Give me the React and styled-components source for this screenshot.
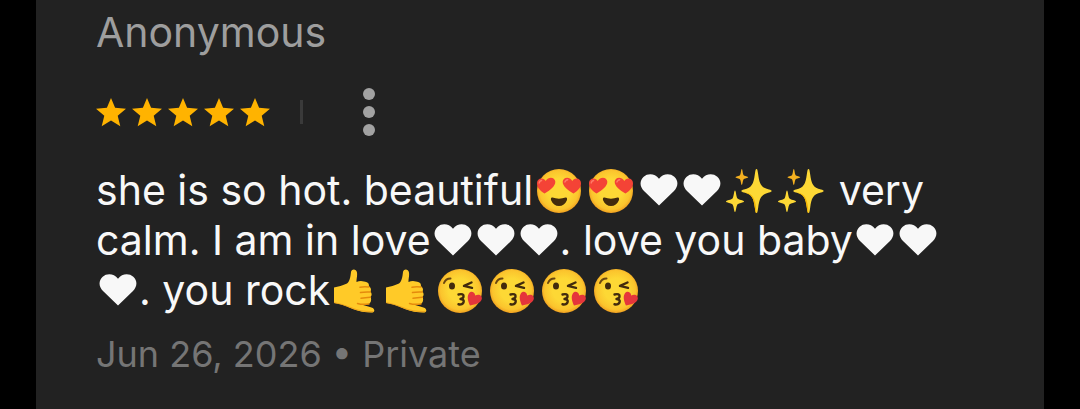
import React from "react";
import styled, { createGlobalStyle } from "styled-components";

const GlobalStyle = createGlobalStyle`
  body {
    margin: 0;
    background: #000000;
    font-family: Inter, Roboto, sans-serif;
  }
`;

const Page = styled.main`
  padding: 0 36px;
`;

const Card = styled.article`
  min-height: 100vh;
  box-sizing: border-box;
  padding: 7px 60px 28px;
  background: #222222;
`;

const Author = styled.h2`
  margin: 0;
  font-size: 41px;
  font-weight: 400;
  line-height: 50px;
  color: #9e9e9e;
`;

const RatingRow = styled.div`
  display: flex;
  align-items: center;
  height: 48px;
  margin: 31px 0 29px;
`;

const Stars = styled.div`
  display: flex;
  gap: 6px;
`;

const Divider = styled.span`
  width: 3px;
  height: 24px;
  margin: 0 54px 0 30px;
  background: #3a3a3a;
`;

const MenuButton = styled.button`
  display: flex;
  padding: 0;
  border: none;
  background: none;
  color: #a2a2a2;
  cursor: pointer;
`;

const Comment = styled.p`
  margin: 0;
  padding-right: 16px;
  font-size: 41px;
  line-height: 50px;
  color: #f8f8f8;
`;

const Emoji = styled.svg`
  width: ${(props) => (props.$narrow ? 43 : 52)}px;
  height: 44px;
  vertical-align: -8px;
`;

const Meta = styled.p`
  margin: 14px 0 0;
  font-size: 36px;
  line-height: 50px;
  color: #757575;
`;

const Defs = styled.svg`
  display: block;
  width: 0;
  height: 0;
`;

const Star = () => (
  <svg width="30" height="30" viewBox="0 0 30 30" aria-hidden="true">
    <path
      d="M15 1l4.1 9.8 10.9.9-8.3 7 2.6 10.6L15 23.6l-9.3 5.7 2.6-10.6-8.3-7 10.9-.9z"
      fill="#ffb300"
    />
  </svg>
);

const Heart = () => (
  <Emoji $narrow viewBox="0 0 43 44" role="img" aria-label="heart">
    <path
      d="M22 36.500L7 22C2.500 17.500 2.500 11.500 6.700 7.800C11 4 18 4.500 22 9.800C26 4.500 33 4 37.300 7.800C41.500 11.500 41.500 17.500 37 22z"
      fill="#f8f8f8"
    />
  </Emoji>
);

const FaceGradient = () => (
  <radialGradient id="face" cx="50%" cy="48%" r="52%">
    <stop offset="0.5" stopColor="#fdd835" />
    <stop offset="0.85" stopColor="#fbc42d" />
    <stop offset="1" stopColor="#f0a020" />
  </radialGradient>
);

const HeartEyes = () => (
  <Emoji viewBox="0 0 52 44" role="img" aria-label="heart eyes">
    <circle cx="26" cy="22" r="22" fill="url(#face)" />
    <path
      d="M11.500 24.500C7.500 22 3.700 18.500 4 14C4.200 9.500 9.500 7.800 12.700 12C15.500 7 21.800 8 22.300 12.500C22.700 17 17 21.500 11.500 24.500z"
      fill="#f44336"
    />
    <path
      d="M40.500 24.500C44.500 22 48.300 18.500 48 14C47.800 9.500 42.500 7.800 39.300 12C36.500 7 30.200 8 29.700 12.500C29.300 17 35 21.500 40.500 24.500z"
      fill="#f44336"
    />
    <path d="M6.200 14.500c0-2 1.500-3.300 3-3" stroke="#ff7b68" strokeWidth="1.500" fill="none" />
    <path d="M31.800 13.500c.3-2 2-3 3.400-2.500" stroke="#ff7b68" strokeWidth="1.500" fill="none" />
    <path
      d="M19.500 28.500C23.500 30 28.500 30 32.500 28.500C34 28 34.500 29.500 33.800 31.500C32.500 35 29.500 37 26 37C22.500 37 19.500 35 18.200 31.500C17.500 29.500 18 28 19.500 28.500z"
      fill="#422b0d"
    />
  </Emoji>
);

const Kiss = () => (
  <Emoji viewBox="0 0 52 44" role="img" aria-label="blowing a kiss">
    <circle cx="26" cy="22" r="22" fill="url(#face)" />
    <g fill="none" stroke="#422b0d" strokeLinecap="round" strokeLinejoin="round">
      <path d="M10 14c1-2.800 3.500-4.500 6.500-4.500" stroke="#6b4710" strokeWidth="2" />
      <path d="M37.500 13.500l-7.500 3.400 8 2" strokeWidth="2.400" />
      <path
        d="M24.500 25.500c3.500-1 5.500 0 5 2.200-.3 1.400-2 2.100-3 2.300 2 0 3.600 1 3.200 2.800-.4 2.200-2.700 3-5.200 2.500"
        strokeWidth="2.400"
      />
    </g>
    <ellipse cx="18" cy="17" rx="3" ry="3.500" fill="#422b0d" />
    <path
      d="M36 36.500C34 32 32.800 28 34.700 24.700C36.500 21.500 40.700 22.500 41.200 26.500C45 24.300 48.500 26.700 47.800 30C47 33.700 42 35.500 36 36.500z"
      fill="#e5353b"
    />
  </Emoji>
);

const Sparkles = () => (
  <Emoji viewBox="0 0 52 44" role="img" aria-label="sparkles">
    <path
      d="M33.500 0C34.500 0 34.700 2 35.200 5.500C36.500 15 38 18.500 46 20.500C49.500 21.300 49.500 22.700 46 23.500C38 25.500 36.500 29 35.200 38.500C34.700 42 34.500 44 33.500 44C32.500 44 32.300 42 31.800 38.500C30.500 29 29 25.500 21 23.500C17.500 22.700 17.500 21.300 21 20.500C29 18.500 30.500 15 31.800 5.500C32.300 2 32.500 0 33.500 0z"
      fill="#fdd835"
    />
    <path
      d="M33.500 44c-1 0-1.200-2-1.700-5.500C30.500 29 29 25.500 21 23.500c7 .5 12 3.500 12.500 20.500z"
      fill="#f4b400"
    />
    <path
      d="M12 21.500C13 21.500 13 27 14.300 29.300C15.300 31 21 31.300 21 32.500C21 33.700 15.300 34 14.300 35.700C13 38 13 43 12 43C11 43 11 38 9.700 35.700C8.700 34 3 33.700 3 32.500C3 31.300 8.700 31 9.700 29.300C11 27 11 21.500 12 21.500z"
      fill="#fdd835"
    />
    <path
      d="M18.800 0C19.600 0 19.600 4.500 20.500 6C21.300 7.200 25.200 7.300 25.200 8.200C25.200 9 21.300 9.200 20.500 10.500C19.600 12 19.600 16 18.800 16C18 16 18 12 17.100 10.500C16.300 9.200 12.500 9 12.500 8.200C12.500 7.300 16.300 7.200 17.100 6C18 4.500 18 0 18.800 0z"
      fill="#f4b020"
    />
  </Emoji>
);

const CallMe = () => (
  <Emoji viewBox="0 0 52 44" role="img" aria-label="call me hand">
    <path
      d="M4 18.500C8 17.500 13 16.500 17 14.500C19.500 13 20.500 8 21 3C21.300-.5 26.500-.5 27 3.500C27.500 7 26.300 10.500 26.500 13C29 12 31 11.500 34 12.500C38 13 39.500 14.500 38.800 17.500C41 18.500 41.500 20.500 40.500 22.500C42 24.500 42 26.500 40.500 28C41.500 30 41.300 32.500 40 34C38.500 35.700 34 35 31.500 35.500L41.500 38.500C45.500 40 45 43.500 41.500 43.500C35 43.500 29 42.500 23 40C18 38 14 35.500 4 34z"
      fill="#ffca28"
    />
    <g fill="none" stroke="#e58a0c" strokeWidth="1.500" strokeLinecap="round">
      <path d="M30 18.300c3-.8 6-.7 9-.3" />
      <path d="M30.500 23.600c3-.6 6-.7 9.800-.5" />
      <path d="M31 29.200c3-.2 6-.5 9.400-.9" />
      <path d="M27.500 34.500c4 1.200 8 1 11.500.4" />
    </g>
    <path
      d="M4 33.500C13 35 18 37.500 23 39.500C29 42 36 42.700 43.500 42.500"
      fill="none"
      stroke="#efa51c"
      strokeWidth="1.200"
    />
  </Emoji>
);

const App = () => {
  return (
    <Page>
      <GlobalStyle />
      <Card>
        <Author>Anonymous</Author>
        <RatingRow>
          <Stars role="img" aria-label="5 out of 5 stars">
            {[1, 2, 3, 4, 5].map((n) => (
              <Star key={n} />
            ))}
          </Stars>
          <Divider />
          <MenuButton type="button" aria-label="More options">
            <svg width="30" height="48" viewBox="0 0 30 48" fill="currentColor">
              <circle cx="12" cy="6" r="6" />
              <circle cx="12" cy="24" r="6" />
              <circle cx="12" cy="42" r="6" />
            </svg>
          </MenuButton>
        </RatingRow>
        <Comment>
          she is so hot. beautiful
          <HeartEyes />
          <HeartEyes />
          <Heart />
          <Heart />
          <Sparkles />
          <Sparkles /> very calm. I am in love
          <Heart />
          <Heart />
          <Heart />. love you baby
          <Heart />
          <Heart />
          <Heart />. you rock
          <CallMe />
          <CallMe />
          <Kiss />
          <Kiss />
          <Kiss />
          <Kiss />
        </Comment>
        <Meta>Jun 26, 2026 • Private</Meta>
        <Defs aria-hidden="true">
          <defs>
            <FaceGradient />
          </defs>
        </Defs>
      </Card>
    </Page>
  );
};

export default App;
